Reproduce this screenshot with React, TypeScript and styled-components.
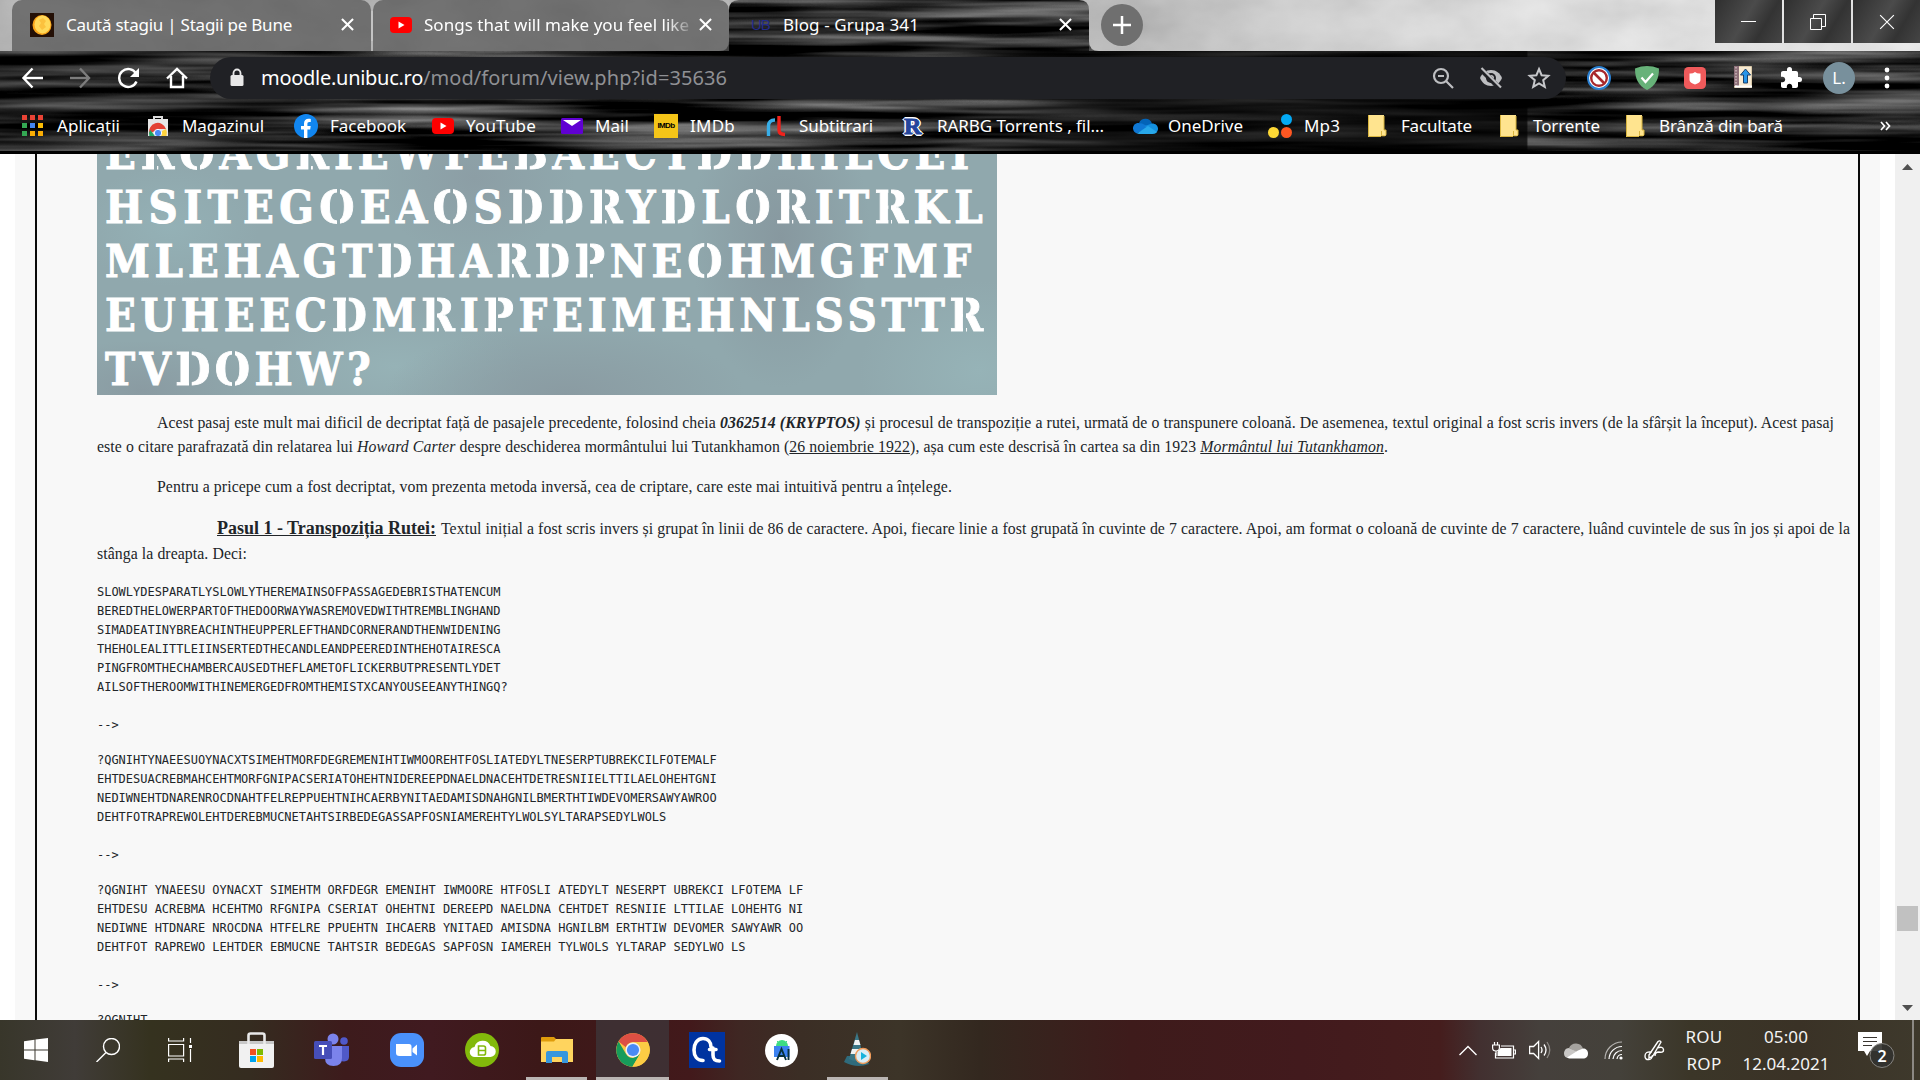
import React, { useLayoutEffect, useRef } from "react";
import styled, { createGlobalStyle, css } from "styled-components";

const Global = createGlobalStyle`
  *, *::before, *::after { box-sizing: border-box; }
  html, body { margin: 0; padding: 0; background: #fff; overflow: hidden; }
`;

const ui = `"Noto Sans", "Open Sans", sans-serif`;
const serif = `"Liberation Serif", "Times New Roman", serif`;

/* Text whose tracking is adjusted so that the run fills a given width. */
const FitSpan = styled.span`
  display: inline-block;
  justify-self: start;
  white-space: pre;
  flex: none;
`;
function Fit({ w, children }: { w: number; children: React.ReactNode }) {
  const ref = useRef<HTMLSpanElement>(null);
  useLayoutEffect(() => {
    const el = ref.current;
    if (!el) return;
    el.style.letterSpacing = "0px";
    const n = (el.textContent || "").length;
    const natural = el.getBoundingClientRect().width;
    el.style.letterSpacing = `${(w - natural) / Math.max(1, n)}px`;
  }, [w]);
  return <FitSpan ref={ref}>{children}</FitSpan>;
}

const Screen = styled.div`
  width: 1920px;
  height: 1080px;
  display: flex;
  flex-direction: column;
  overflow: hidden;
  font-family: ${ui};
`;

/* ---------- browser frame ---------- */
const Frame = styled.header`
  position: relative;
  isolation: isolate;
  height: 154px;
  flex: none;
  display: flex;
  flex-direction: column;
  background: #151515;
  color: #fff;
`;
const Backdrop = styled.svg`
  position: absolute;
  inset: 0;
  z-index: -1;
`;
const TabStrip = styled.div`
  height: 51px;
  display: flex;
  align-items: flex-start;
  padding-left: 12px;
`;
const Tab = styled.div<{ $w: number; $pad: number; $active?: boolean }>`
  width: ${(p) => p.$w}px;
  height: 51px;
  flex: none;
  display: flex;
  align-items: center;
  padding: 0 17px 2px ${(p) => p.$pad}px;
  font-size: 17px;
  border-radius: 10px 10px 0 0;
  ${(p) =>
    !p.$active &&
    css`
      background: rgba(70, 70, 70, 0.62);
    `}
`;
const TabIcon = styled.span<{ $gap: number }>`
  display: flex;
  margin-right: ${(p) => p.$gap}px;
`;
const TabTitle = styled.span<{ $fade?: boolean }>`
  flex: 1;
  display: flex;
  overflow: hidden;
  ${(p) =>
    p.$fade &&
    css`
      mask-image: linear-gradient(90deg, #000 88%, transparent 99%);
    `}
`;
const Divider = styled.i`
  width: 2px;
  height: 30px;
  margin-top: 11px;
  background: #c4c4c4;
  flex: none;
`;
const NewTab = styled.button`
  width: 42px;
  height: 42px;
  margin: 4px 0 0 12px;
  padding: 0;
  border: 0;
  border-radius: 50%;
  background: #6f6f6f;
  display: grid;
  place-items: center;
`;
const Caption = styled.div`
  margin-left: auto;
  display: flex;
  gap: 2px;
`;
const CaptionButton = styled.button`
  width: 67px;
  height: 43px;
  padding: 0;
  border: 0;
  display: grid;
  place-items: center;
  background: linear-gradient(120deg, #2f2f2f, #4b4b4b 45%, #333 70%, #454545);
`;
const Toolbar = styled.div`
  height: 51px;
  display: flex;
  align-items: center;
  padding: 2px 0 0 20px;
`;
const NavButton = styled.span<{ $w?: number }>`
  width: ${(p) => p.$w ?? 48}px;
  display: flex;
  flex: none;
`;
const Omnibox = styled.div`
  width: 1356px;
  flex: none;
  height: 42px;
  border-radius: 21px;
  background: #202125;
  display: flex;
  align-items: center;
  padding: 0 15px 0 19px;
  margin-right: 9px;
  font-size: 20px;
`;
const Url = styled.div`
  flex: 1;
  margin-left: 16px;
  display: flex;
`;
const UrlPath = styled.span`
  color: #8f9094;
`;
const OmniIcons = styled.div`
  display: flex;
  gap: 24px;
`;
const Extension = styled.span`
  width: 48px;
  display: flex;
  align-items: center;
  justify-content: center;
  flex: none;
`;
const Extensions = styled.div`
  display: flex;
  align-items: center;
`;
const Avatar = styled.span`
  width: 32px;
  height: 32px;
  border-radius: 50%;
  background: #78909c;
  display: grid;
  place-items: center;
  font-size: 17px;
  color: #fff;
`;
const Bookmarks = styled.nav`
  height: 50px;
  display: flex;
  align-items: center;
  padding: 0 0 3px 22px;
  font-size: 17px;
`;
const Bookmark = styled.span<{ $w: number; $text: number }>`
  width: ${(p) => p.$w}px;
  flex: none;
  display: grid;
  grid-template-columns: ${(p) => p.$text}px 1fr;
  align-items: center;
`;

/* ---------- page ---------- */
const Viewport = styled.main`
  height: 866px;
  flex: none;
  display: flex;
  overflow: hidden;
  background: #fff;
`;
const Page = styled.div`
  width: 1865px;
  margin-left: 15px;
  padding: 0 20px;
  background: #f8f8f8;
`;
const Post = styled.article`
  height: 866px;
  border: solid #0a0a0a;
  border-width: 0 2px;
  padding-left: 60px;
  overflow: hidden;
  color: #212529;
  font-family: ${serif};
  font-size: 15.8px;
`;
const Plate = styled.div`
  width: 900px;
  height: 241px;
  overflow: hidden;
  padding-left: 8px;
  color: #fff;
  font: bold 45px/54px "DejaVu Serif Condensed", "DejaVu Serif", serif;
  font-stretch: condensed;
  -webkit-text-stroke: 0.9px #fff;
  background:
    radial-gradient(ellipse 90px 60px at 8% 30%, #94b1b6, transparent),
    radial-gradient(ellipse 90px 150px at 76% 35%, #87989f, transparent),
    radial-gradient(ellipse 180px 70px at 52% 100%, #8a9ba2, transparent),
    radial-gradient(ellipse 120px 90px at 98% 90%, #96b3b7, transparent),
    radial-gradient(ellipse 100px 80px at 42% 10%, #8c9ea5, transparent),
    radial-gradient(ellipse 130px 60px at 33% 88%, #96b2b6, transparent),
    radial-gradient(ellipse 120px 50px at 5% 98%, #8a9ba2, transparent),
    #90a8ad;
`;
const PlateRows = styled.div`
  margin-top: -27px;
`;
const PlateRow = styled.div`
  height: 54px;
`;
/* Stencil bridge: a thin vertical cut through the glyph. */
const Cut = styled.span<{ $at: number }>`
  color: transparent;
  -webkit-text-stroke-color: transparent;
  background: linear-gradient(
    90deg,
    #fff ${(p) => p.$at - 3}%,
    transparent ${(p) => p.$at - 2}%,
    transparent ${(p) => p.$at + 4}%,
    #fff ${(p) => p.$at + 5}%
  );
  background-clip: text;
  -webkit-background-clip: text;
`;
const Para = styled.p<{ $top?: number }>`
  margin: ${(p) => p.$top ?? 16}px 0 0;
`;
const Line = styled.span<{ $indent?: number; $h?: number }>`
  display: flex;
  align-items: baseline;
  padding-left: ${(p) => p.$indent ?? 0}px;
  height: ${(p) => p.$h ?? 24}px;
  line-height: ${(p) => p.$h ?? 24}px;
`;
const StepTitle = styled.b`
  font-size: 18px;
  margin-right: 5px;
`;
const Cipher = styled.pre`
  margin: 16px 0 0;
  font: 11.985px/19px "DejaVu Sans Mono", monospace;
  color: #212529;
`;
const Scrollbar = styled.aside`
  width: 25px;
  margin-left: 15px;
  background: #f0f0f0;
  display: flex;
  flex-direction: column;
  align-items: center;
  padding: 10px 0 9px;
`;
const Thumb = styled.i`
  width: 21px;
  height: 25px;
  margin-top: 736px;
  margin-bottom: auto;
  background: #c1c1c1;
`;

/* ---------- taskbar ---------- */
const Taskbar = styled.footer`
  height: 60px;
  flex: none;
  display: flex;
  color: #f4f4f4;
  background: linear-gradient(
    90deg,
    #38362a 0,
    #403c38 75px,
    #35321f 150px,
    #352c20 250px,
    #3d1b1c 345px,
    #401a20 430px,
    #3c1818 540px,
    #42191b 690px,
    #3f2723 740px,
    #3b2e25 800px,
    #3c3428 900px,
    #33281f 980px,
    #3e1b1b 1130px,
    #421a1d 1300px,
    #451d1d 1440px,
    #423030 1480px,
    #45403c 1540px,
    #44413a 1620px,
    #3b3628 1690px,
    #3a3226 1800px,
    #3e392c 1920px
  );
`;
const TaskButton = styled.span<{ $w: number; $active?: boolean }>`
  width: ${(p) => p.$w}px;
  display: flex;
  align-items: center;
  justify-content: center;
  flex: none;
  background: ${(p) => (p.$active ? "rgba(62,62,66,.62)" : "none")};
`;
const RunningApp = styled(TaskButton)<{ $line: number }>`
  flex-direction: column;
  justify-content: flex-end;
  &::after {
    content: "";
    width: ${(p) => p.$line}px;
    height: 3px;
    margin-top: 10px;
    background: #bab5b3;
  }
`;
const Tray = styled.div`
  margin-left: auto;
  display: flex;
  align-items: center;
`;
const TrayIcon = styled.span<{ $w: number }>`
  width: ${(p) => p.$w}px;
  display: flex;
  flex: none;
`;
const TrayText = styled.div<{ $w: number; $gap?: number }>`
  width: ${(p) => p.$w}px;
  margin-right: ${(p) => p.$gap ?? 0}px;
  display: flex;
  flex-direction: column;
  align-items: center;
  font: 17px/27px ${ui};
`;
const ShowDesktop = styled.i`
  width: 8px;
  height: 60px;
  border-left: 2px solid #8c8984;
`;

/* ---------- icons ---------- */
const Cross = ({ s = 14, w = 2.2 }: { s?: number; w?: number }) => (
  <svg width={s} height={s} viewBox="0 0 14 14" fill="none" stroke="#fff" strokeWidth={w}>
    <path d="M1 1l12 12M13 1L1 13" />
  </svg>
);
const YouTube = () => (
  <svg width="22" height="16" viewBox="0 0 22 16">
    <rect width="22" height="16" rx="4" fill="#f00" />
    <path d="M8.5 4.6v6.8l6-3.4z" fill="#fff" />
  </svg>
);
const Coin = () => (
  <svg width="24" height="24" viewBox="0 0 24 24">
    <rect width="24" height="24" fill="#241006" />
    <ellipse cx="12" cy="12" rx="9.5" ry="10" fill="#f9a51a" />
    <ellipse cx="12.5" cy="11.5" rx="8" ry="9" fill="#ffd95a" />
    <path d="M9 7l4-2 3 3-2 3 2 3-4 3-3-4 2-3z" fill="#f7a51c" opacity=".45" />
  </svg>
);
const ChromeDisc = ({ s }: { s: number }) => (
  <svg width={s} height={s} viewBox="0 0 34 34">
    <circle cx="17" cy="17" r="16.8" fill="#fbc740" />
    <path d="M2.6 8.4A16.8 16.8 0 0 1 31.7 9H17a8 8 0 0 0-7.2 5.2z" fill="#dd4f43" />
    <path d="M2.6 8.4A16.8 16.8 0 0 0 16.4 33.8L24 21 17 25a8 8 0 0 1-7-4z" fill="#179c5a" />
    <path d="M31.7 9A16.8 16.8 0 0 1 16.4 33.8L24 21a8 8 0 0 0 0-8l-3-4z" fill="#fccc44" />
    <circle cx="17" cy="17" r="7.6" fill="#f1f1f1" />
    <circle cx="17" cy="17" r="6.1" fill="#4a8af4" />
  </svg>
);
const AppsGrid = () => (
  <svg width="21" height="21" viewBox="0 0 21 21">
    {["#ea4335", "#ea4335", "#ea4335", "#34a853", "#4285f4", "#fbbc05", "#34a853", "#fbae05", "#fbae05"].map((c, i) => (
      <rect key={i} x={(i % 3) * 8} y={Math.floor(i / 3) * 8} width="5" height="5" fill={c} />
    ))}
  </svg>
);
const WebStore = () => (
  <svg width="20" height="20" viewBox="0 0 20 20">
    <path d="M6 4V1h8v3" fill="none" stroke="#ddd" strokeWidth="2" />
    <path d="M0 3h20v17H0z" fill="#e6e6e6" />
    <path d="M1.5 18a8.5 8.5 0 0 1 16.5-5H10z" fill="#e34133" />
    <path d="M1.3 20a8 8 0 0 1 .9-6l4.8 6z" fill="#1da462" />
    <path d="M18 13a9 9 0 0 1 .5 7H12l2-5z" fill="#fdd23e" />
    <circle cx="10" cy="17" r="3.7" fill="#4a8af4" stroke="#fff" />
  </svg>
);
const Facebook = () => (
  <svg width="24" height="24" viewBox="0 0 24 24">
    <circle cx="12" cy="12" r="12" fill="#1186f0" />
    <path d="M10 24v-8.5H7V12h3V9.400C10 6.400 11.800 4.700 14.500 4.700c1.300 0 2.300.2 2.300.2v3h-1.500c-1.500 0-1.900.9-1.900 1.900V12h3.300l-.5 3.500h-2.800V24z" fill="#fff" />
  </svg>
);
const Mail = () => (
  <svg width="22" height="16" viewBox="0 0 22 16">
    <rect width="22" height="16" rx="1.500" fill="#6001d2" />
    <path d="M2 2h18l-9 6z" fill="#fff" />
  </svg>
);
const ImdbBox = styled.span`
  width: 24px;
  height: 24px;
  display: grid;
  place-items: center;
  background: #f5c518;
  color: #000;
  font: bold 8px/1 "Liberation Sans", sans-serif;
  letter-spacing: -0.6px;
`;
const Subs = () => (
  <svg width="20" height="22" viewBox="0 0 20 22" fill="none" strokeWidth="3.400">
    <path d="M2.500 21V11q0-6 6.500-6" stroke="#38aee8" />
    <path d="M13 1v14q0 4.500 6 4.500" stroke="#f0221c" />
  </svg>
);
const RLogo = styled.span`
  width: 22px;
  font: bold 24px/24px "Liberation Serif", serif;
  -webkit-text-stroke: 1px #24459c;
  color: #24459c;
  padding-left: 2px;
  text-shadow: 1px 1px #fff, -1px -1px #fff, 1px -1px #fff, -1px 1px #fff, 2px 0 #fff, -2px 0 #fff, 0 2px #fff, 0 -2px #fff;
`;
const OneDrive = () => (
  <svg width="25" height="16" viewBox="0 0 25 16">
    <path d="M6 5a7 7 0 0 1 13 .500l-5 5z" fill="#0364b8" />
    <path d="M5.500 5C2 5 0 7.500 0 10.300 0 13 2 15 4 15.500L16 9 9 5.500z" fill="#0f78d4" />
    <path d="M12 8l7-2.500c3.600 0 6 2.200 6 5.300 0 3-2.300 4.700-5 4.700z" fill="#1490df" />
    <path d="M4 15.500L15 8l9 6c-1 1.300-2.500 1.900-4.500 1.900H6c-.8 0-1.500-.1-2-.4z" fill="#28a8ea" />
  </svg>
);
const Dots3 = () => (
  <svg width="25" height="24" viewBox="0 0 25 24">
    <circle cx="18.500" cy="5.500" r="5.500" fill="#03a9f4" />
    <circle cx="5.500" cy="18.500" r="5.500" fill="#fdd835" />
    <circle cx="18.500" cy="18.500" r="5.500" fill="#ff5722" />
  </svg>
);
const FolderIcon = () => (
  <svg width="19" height="22" viewBox="0 0 19 22">
    <path d="M0 0h16v15h2v5q0 1-1 1h-4v1H0z" fill="#ffe48f" />
    <path d="M.5 0v21.500h12.500M16 1v14h2v4.500q0 1.300-1.500 1.300h-3V16" fill="none" stroke="#d9b53f" strokeWidth="1" />
  </svg>
);
const UniLogo = styled.span`
  width: 19px;
  font: 15px/20px "Liberation Sans", sans-serif;
  letter-spacing: -1.2px;
  color: #232b8c;
`;

const wood = (
  <Backdrop width="1920" height="154">
    <defs>
      <filter id="grain" x="0" y="0" width="100%" height="100%" colorInterpolationFilters="sRGB">
        <feTurbulence type="fractalNoise" baseFrequency="0.0035 0.09" numOctaves="3" seed="11" />
        <feColorMatrix values="1.05 0 0 0 -.35  1.05 0 0 0 -.35  1.05 0 0 0 -.35  0 0 0 0 1" />
      </filter>
      <filter id="mist" x="0" y="0" width="100%" height="100%">
        <feTurbulence type="fractalNoise" baseFrequency="0.012 0.02" numOctaves="4" seed="5" />
        <feColorMatrix values=".7 0 0 0 .2  .7 0 0 0 .2  .7 0 0 0 .2  0 0 0 0 .3" />
      </filter>
      <linearGradient id="sky">
        <stop offset="0" stopColor="#a8a8a8" />
        <stop offset=".3" stopColor="#b0b0b0" />
        <stop offset=".6" stopColor="#bcbcbc" />
        <stop offset=".77" stopColor="#e2e2e2" />
        <stop offset="1" stopColor="#f6f6f6" />
      </linearGradient>
      <linearGradient id="shade">
        <stop offset="0" stopColor="#000" stopOpacity=".35" />
        <stop offset=".2" stopColor="#000" stopOpacity="0" />
        <stop offset=".5" stopColor="#000" stopOpacity="0" />
        <stop offset=".58" stopColor="#000" stopOpacity=".6" />
        <stop offset=".795" stopColor="#000" stopOpacity=".75" />
        <stop offset=".796" stopColor="#000" stopOpacity=".1" />
        <stop offset="1" stopColor="#000" stopOpacity=".15" />
      </linearGradient>
      <clipPath id="strip">
        <path d="M0 0H729V51H0zM1089 0H1920V51H1089z" />
      </clipPath>
    </defs>
    <rect width="1920" height="154" filter="url(#grain)" />
    <rect y="51" width="1920" height="103" fill="url(#shade)" />
    <path
      d="M0 0H1920V51H1099Q1089 51 1089 41V10Q1089 0 1079 0H739Q729 0 729 10V41Q729 51 719 51H0z"
      fill="url(#sky)"
    />
    <g clipPath="url(#strip)">
      <rect width="1920" height="51" filter="url(#mist)" />
    </g>
    <path d="M0 152.500H1920" stroke="#000" strokeWidth="3" />
  </Backdrop>
);

/* ---------- content ---------- */
const cuts: Record<string, number> = { O: 46, D: 37, R: 37, P: 38, B: 37 };
const plate: [string, number][] = [
  ["EROAGRIEWFEBAECTDDHILCEI", 869],
  ["HSITEGOEAOSDDRYDLORITRKL", 883],
  ["MLEHAGTDHARDPNEOHMGFMF", 871],
  ["EUHEECDMRIPFEIMEHNLSSTTR", 883],
  ["TVDOHW?", 270],
];

const pre1 = `SLOWLYDESPARATLYSLOWLYTHEREMAINSOFPASSAGEDEBRISTHATENCUM
BEREDTHELOWERPARTOFTHEDOORWAYWASREMOVEDWITHTREMBLINGHAND
SIMADEATINYBREACHINTHEUPPERLEFTHANDCORNERANDTHENWIDENING
THEHOLEALITTLEIINSERTEDTHECANDLEANDPEEREDINTHEHOTAIRESCA
PINGFROMTHECHAMBERCAUSEDTHEFLAMETOFLICKERBUTPRESENTLYDET
AILSOFTHEROOMWITHINEMERGEDFROMTHEMISTXCANYOUSEEANYTHINGQ?

-->`;
const pre2 = `?QGNIHTYNAEESUOYNACXTSIMEHTMORFDEGREMENIHTIWMOOREHTFOSLIATEDYLTNESERPTUBREKCILFOTEMALF
EHTDESUACREBMAHCEHTMORFGNIPACSERIATOHEHTNIDEREEPDNAELDNACEHTDETRESNIIELTTILAELOHEHTGNI
NEDIWNEHTDNARENROCDNAHTFELREPPUEHTNIHCAERBYNITAEDAMISDNAHGNILBMERTHTIWDEVOMERSAWYAWROO
DEHTFOTRAPREWOLEHTDEREBMUCNETAHTSIRBEDEGASSAPFOSNIAMEREHTYLWOLSYLTARAPSEDYLWOLS

-->`;
const pre3 = `?QGNIHT YNAEESU OYNACXT SIMEHTM ORFDEGR EMENIHT IWMOORE HTFOSLI ATEDYLT NESERPT UBREKCI LFOTEMA LF
EHTDESU ACREBMA HCEHTMO RFGNIPA CSERIAT OHEHTNI DEREEPD NAELDNA CEHTDET RESNIIE LTTILAE LOHEHTG NI
NEDIWNE HTDNARE NROCDNA HTFELRE PPUEHTN IHCAERB YNITAED AMISDNA HGNILBM ERTHTIW DEVOMER SAWYAWR OO
DEHTFOT RAPREWO LEHTDER EBMUCNE TAHTSIR BEDEGAS SAPFOSN IAMEREH TYLWOLS YLTARAP SEDYLWO LS

-->`;

const bookmarks: { icon: React.ReactNode; label: string; w: number; text: number; fit: number }[] = [
  { icon: <AppsGrid />, label: "Aplicații", w: 126, text: 35, fit: 63 },
  { icon: <WebStore />, label: "Magazinul", w: 146, text: 34, fit: 82 },
  { icon: <Facebook />, label: "Facebook", w: 138, text: 36, fit: 76 },
  { icon: <YouTube />, label: "YouTube", w: 129, text: 34, fit: 70 },
  { icon: <Mail />, label: "Mail", w: 93, text: 34, fit: 34 },
  { icon: <ImdbBox>IMDb</ImdbBox>, label: "IMDb", w: 112, text: 36, fit: 45 },
  { icon: <Subs />, label: "Subtitrari", w: 136, text: 33, fit: 74 },
  { icon: <RLogo>R</RLogo>, label: "RARBG Torrents , fil...", w: 231, text: 35, fit: 167 },
  { icon: <OneDrive />, label: "OneDrive", w: 135, text: 35, fit: 75 },
  { icon: <Dots3 />, label: "Mp3", w: 100, text: 36, fit: 36 },
  { icon: <FolderIcon />, label: "Facultate", w: 132, text: 33, fit: 71 },
  { icon: <FolderIcon />, label: "Torrente", w: 126, text: 33, fit: 67 },
  { icon: <FolderIcon />, label: "Brânză din bară", w: 254, text: 33, fit: 124 },
];

function Browser() {
  return (
    <Frame>
      {wood}
      <TabStrip>
        <Tab $w={359} $pad={18}>
          <TabIcon $gap={12}><Coin /></TabIcon>
          <TabTitle><Fit w={226}>Caută stagiu | Stagii pe Bune</Fit></TabTitle>
          <Cross s={13} />
        </Tab>
        <Divider />
        <Tab $w={356} $pad={17}>
          <TabIcon $gap={12}><YouTube /></TabIcon>
          <TabTitle $fade><Fit w={265}>Songs that will make you feel like</Fit></TabTitle>
          <Cross s={13} />
        </Tab>
        <Tab $w={360} $pad={22} $active>
          <TabIcon $gap={13}><UniLogo>UB</UniLogo></TabIcon>
          <TabTitle><Fit w={136}>Blog - Grupa 341</Fit></TabTitle>
          <Cross s={13} />
        </Tab>
        <NewTab>
          <svg width="18" height="18" stroke="#fff" strokeWidth="2.500"><path d="M9 0v18M0 9h18" /></svg>
        </NewTab>
        <Caption>
          <CaptionButton>
            <svg width="15" height="15" stroke="#fff"><path d="M0 7.500h15" /></svg>
          </CaptionButton>
          <CaptionButton>
            <svg width="16" height="16" fill="none" stroke="#fff"><path d="M.5 4.500h11v11H.5zM3.500 4.500V.5h12v12h-4" /></svg>
          </CaptionButton>
          <CaptionButton><Cross s={16} w={1} /></CaptionButton>
        </Caption>
      </TabStrip>
      <Toolbar>
        <NavButton>
          <svg width="24" height="22" viewBox="0 0 24 22" fill="none" stroke="#fff" strokeWidth="2.400"><path d="M23 11H4M12.500 1.500L3.500 11l9 9.500" /></svg>
        </NavButton>
        <NavButton>
          <svg width="24" height="22" viewBox="0 0 24 22" fill="none" stroke="#7d7d7d" strokeWidth="2.400"><path d="M2 11h19M12 1.500l9 9.500-9 9.500" /></svg>
        </NavButton>
        <NavButton $w={50}>
          <svg width="24" height="22" viewBox="0 0 24 22" fill="none" stroke="#fff" strokeWidth="2.400"><path d="M20.500 14.500A9 9 0 1 1 20 6.500" /><path d="M23 1v9h-9z" fill="#fff" stroke="none" /></svg>
        </NavButton>
        <NavButton $w={44}>
          <svg width="22" height="22" viewBox="0 0 22 22" fill="none" stroke="#fff" strokeWidth="2.400"><path d="M1 11.500L11 2l10 9.500M5 9v11h12V9" /></svg>
        </NavButton>
        <Omnibox>
          <svg width="16" height="19" viewBox="0 0 16 19"><rect x="1.500" y="7" width="13" height="11" rx="1.500" fill="#e8e8e8" /><path d="M4.500 8V5a3.500 3.500 0 0 1 7 0v3" fill="none" stroke="#e8e8e8" strokeWidth="1.800" /></svg>
          <Url>
            <Fit w={162}>moodle.unibuc.ro</Fit>
            <UrlPath><Fit w={304}>/mod/forum/view.php?id=35636</Fit></UrlPath>
          </Url>
          <OmniIcons>
            <svg width="24" height="24" viewBox="0 0 24 24" fill="none" stroke="#bdbec1" strokeWidth="2.200"><circle cx="10" cy="10" r="7" /><path d="M15 15l7 7M7 10h6" /></svg>
            <svg width="24" height="24" viewBox="0 0 24 24" fill="#bdbec1"><path d="M12 4C7 4 3 7 1 12c2 5 6 8 11 8s9-3 11-8c-2-5-6-8-11-8z" /><circle cx="12" cy="12" r="5" fill="#202125" /><circle cx="12" cy="12" r="3" /><path d="M1.500 3L21 22.500" stroke="#202125" strokeWidth="5" /><path d="M2.500 2L22 21.500" stroke="#bdbec1" strokeWidth="2.200" /></svg>
            <svg width="24" height="24" viewBox="0 0 24 24" fill="none" stroke="#c6c7ca" strokeWidth="2"><path d="M12 3l2.600 6.200 6.700.6-5.100 4.400 1.600 6.600L12 17.300l-5.800 3.500 1.600-6.600-5.100-4.400 6.700-.6z" /></svg>
          </OmniIcons>
        </Omnibox>
        <Extensions>
          <Extension>
            <svg width="24" height="24" viewBox="0 0 24 24" fill="none"><circle cx="12" cy="12" r="11" fill="#fff" stroke="#2a7fd0" strokeWidth="2" /><circle cx="12" cy="12" r="7.800" stroke="#a8282c" strokeWidth="2.400" /><path d="M6.500 6.500l11 11" stroke="#a8282c" strokeWidth="2.600" /></svg>
          </Extension>
          <Extension>
            <svg width="24" height="24" viewBox="0 0 24 24"><path d="M12 0c4 0 8 .8 12 2.500 0 10-3 17-12 21.500C3 19.500 0 12.500 0 2.500 4 .8 8 0 12 0z" fill="#67b279" /><path d="M6.500 11.500l4 4.500L18 7.500" fill="none" stroke="#fff" strokeWidth="2.200" /></svg>
          </Extension>
          <Extension>
            <svg width="22" height="22" viewBox="0 0 22 22"><rect width="22" height="22" rx="4.500" fill="#f05a5b" /><path d="M5.500 6.500Q8.500 7 11 5q2.500 2 5.500 1.500V13q0 2.500-5.500 4.500-5.500-2-5.500-4.500z" fill="#fff" /></svg>
          </Extension>
          <Extension>
            <svg width="19" height="23" viewBox="0 0 19 23"><path d="M.5.5h17v21H.5z" fill="#f7ead2" stroke="#d8c8a8" /><path d="M0 0h5v20H0z" fill="#8d6f78" /><path d="M2 1v19" stroke="#e9dada" strokeDasharray="1.500 1.500" /><path d="M1 20.500h17" stroke="#fff" strokeWidth="2" /><path d="M11.500 3l5 6h-3v8h-4V9h-3z" fill="#2694e8" stroke="#1a3f6a" /></svg>
          </Extension>
          <Extension>
            <svg width="24" height="24" viewBox="0 0 24 24" fill="#fff"><path d="M20.500 11H19V7c0-1.100-.9-2-2-2h-4V3.500a2.500 2.500 0 0 0-5 0V5H4c-1.100 0-2 .9-2 2v3.800h1.500c1.500 0 2.700 1.200 2.700 2.700S5 16.200 3.500 16.200H2V20c0 1.100.9 2 2 2h3.800v-1.500c0-1.500 1.200-2.700 2.700-2.700s2.700 1.200 2.700 2.700V22H17c1.100 0 2-.9 2-2v-4h1.500a2.500 2.500 0 0 0 0-5z" /></svg>
          </Extension>
          <Extension><Avatar>L.</Avatar></Extension>
          <Extension>
            <svg width="6" height="22" viewBox="0 0 6 22" fill="#fff"><circle cx="3" cy="3" r="2.400" /><circle cx="3" cy="11" r="2.400" /><circle cx="3" cy="19" r="2.400" /></svg>
          </Extension>
        </Extensions>
      </Toolbar>
      <Bookmarks>
        {bookmarks.map((b, i) => (
          <Bookmark key={i} $w={b.w} $text={b.text}>
            {b.icon}
            <Fit w={b.fit}>{b.label}</Fit>
          </Bookmark>
        ))}
        <svg width="11" height="10" viewBox="0 0 11 10" fill="none" stroke="#fff" strokeWidth="1.700"><path d="M1 1l3.500 4L1 9M6 1l3.500 4L6 9" /></svg>
      </Bookmarks>
    </Frame>
  );
}

function ForumPost() {
  return (
    <Post>
      <Plate>
        <PlateRows>
          {plate.map(([row, w]) => (
            <PlateRow key={row}>
              <Fit w={w}>
                {row.split("").map((c, i) => (cuts[c] ? <Cut key={i} $at={cuts[c]}>{c}</Cut> : c))}
              </Fit>
            </PlateRow>
          ))}
        </PlateRows>
      </Plate>
      <Para>
        <Line $indent={60}>
          <Fit w={1677}>
            Acest pasaj este mult mai dificil de decriptat față de pasajele precedente, folosind cheia{" "}
            <b><i>0362514 (KRYPTOS)</i></b> și procesul de transpoziție a rutei, urmată de o transpunere coloană. De
            {" "}asemenea, textul original a fost scris invers (de la sfârșit la început). Acest pasaj
          </Fit>
        </Line>
        <Line>
          <Fit w={1291}>
            este o citare parafrazată din relatarea lui <i>Howard Carter</i> despre deschiderea mormântului lui Tutankhamon (<u>26 noiembrie 1922</u>), așa cum este descrisă în cartea sa din 1923 <i><u>Mormântul lui Tutankhamon</u></i>.
          </Fit>
        </Line>
      </Para>
      <Para>
        <Line $indent={60}>
          <Fit w={795}>Pentru a pricepe cum a fost decriptat, vom prezenta metoda inversă, cea de criptare, care este mai intuitivă pentru a înțelege.</Fit>
        </Line>
      </Para>
      <Para $top={16}>
        <Line $indent={120} $h={26}>
          <StepTitle><Fit w={219}><u>Pasul 1 - Transpoziția Rutei:</u></Fit></StepTitle>
          <Fit w={1409}>Textul inițial a fost scris invers și grupat în linii de 86 de caractere. Apoi, fiecare linie a fost grupată în cuvinte de 7 caractere. Apoi, am format o coloană de cuvinte de 7 caractere, luând cuvintele de sus în jos și apoi de la</Fit>
        </Line>
        <Line $h={26}><Fit w={150}>stânga la dreapta. Deci:</Fit></Line>
      </Para>
      <Cipher>{pre1}</Cipher>
      <Cipher>{pre2}</Cipher>
      <Cipher>{pre3}</Cipher>
      <Cipher>?QGNIHT</Cipher>
    </Post>
  );
}

function WindowsTaskbar() {
  return (
    <Taskbar>
      <TaskButton $w={72}>
        <svg width="24" height="24" viewBox="0 0 24 24" fill="#fff"><path d="M0 3.300L10.500 1.800V11.500H0zM11.500 1.600L24 0v11.500H11.500zM0 12.500h10.500v9.700L0 20.700zM11.500 12.500H24V24l-12.500-1.700z" /></svg>
      </TaskButton>
      <TaskButton $w={72}>
        <svg width="24" height="24" viewBox="0 0 24 24" fill="none" stroke="#fff" strokeWidth="1.400"><circle cx="15.500" cy="8.500" r="8" /><path d="M10 14.500L.5 24" /></svg>
      </TaskButton>
      <TaskButton $w={72}>
        <svg width="24" height="24" viewBox="0 0 24 24" fill="none" stroke="#fff" strokeWidth="1.200"><path d="M.6 0v3h15V0M.6 24v-3h15v3M.6 6.500h15v11.500H.6zM22.500 0v5M22.500 11v13" /><rect x="21" y="7" width="3" height="3" fill="#fff" stroke="none" /></svg>
      </TaskButton>
      <TaskButton $w={81}>
        <svg width="35" height="36" viewBox="0 0 35 36"><path d="M0 9h35v25q0 2-2 2H2q-2 0-2-2z" fill="#f1f1f1" /><path d="M0 9h35v3H0z" fill="#c8c8c8" /><path d="M9.500 12V3.500q0-2 2-2h12q2 0 2 2V12" fill="none" stroke="#e9e9e9" strokeWidth="2.600" /><path d="M11 17h6v6h-6z" fill="#f25022" /><path d="M18 17h6v6h-6z" fill="#7fba00" /><path d="M11 24h6v6h-6z" fill="#00a4ef" /><path d="M18 24h6v6h-6z" fill="#ffb900" /></svg>
      </TaskButton>
      <TaskButton $w={70}>
        <svg width="36" height="34" viewBox="0 0 36 34"><circle cx="19" cy="6" r="5.500" fill="#7b83eb" /><circle cx="30" cy="8" r="3.800" fill="#5059c9" /><path d="M25 13h10v11q0 4-5 4.500-5 0-5-4.500z" fill="#5059c9" /><path d="M11 13h17v12q0 8-8.500 8T11 25z" fill="#7b83eb" /><rect y="8" width="18" height="18" rx="1.500" fill="#464eb8" /><path d="M5 13h8M9 13v9" stroke="#fff" strokeWidth="2.200" /></svg>
      </TaskButton>
      <TaskButton $w={80}>
        <svg width="34" height="34" viewBox="0 0 34 34"><rect width="34" height="34" rx="11" fill="#4a91fb" /><path d="M6 11h13q2.500 0 2.500 2.500V23h-12Q6 23 6 20zM22.500 15.500L27 11.500v11l-4.500-3.500z" fill="#fff" /></svg>
      </TaskButton>
      <TaskButton $w={70}>
        <svg width="34" height="34" viewBox="0 0 34 34"><circle cx="17" cy="17" r="17" fill="#82b90b" /><path d="M10 24a5 5 0 0 1-.5-10 8.500 8.500 0 0 1 16-1 5.500 5.500 0 0 1-.5 11z" fill="#fff" /><path d="M13.500 13h5q2 0 2 2v5.500q0 1.500-2 1.500h-5zM13.500 17.500h7" fill="none" stroke="#82b90b" strokeWidth="1.600" /></svg>
      </TaskButton>
      <RunningApp $w={79} $line={61}>
        <svg width="32" height="34" viewBox="0 0 32 34"><path d="M0 5q0-1 1-1h12l2 2h17v4H0z" fill="#df9c0b" /><path d="M0 8.500h13l2-2.500h17v23H0z" fill="#ffd45e" /><path d="M5 30V20q0-2 2-2h18q2 0 2 2v10h-6v-6H11v6z" fill="#3796dd" /></svg>
      </RunningApp>
      <RunningApp $w={73} $line={73} $active>
        <ChromeDisc s={34} />
      </RunningApp>
      <TaskButton $w={76}>
        <svg width="36" height="36" viewBox="0 0 36 36" fill="none" stroke="#fff" strokeLinecap="round"><rect width="36" height="36" fill="#0033a0" stroke="none" /><path d="M22 15c0-5-3-8.500-8-8.500C8 6.500 5 12 5 18s3 10.500 9 10.500M24 16v7c0 4.500 2 6 6.500 6M20.500 17.500h6.500" strokeWidth="3.600" /></svg>
      </TaskButton>
      <TaskButton $w={73}>
        <svg width="33" height="33" viewBox="0 0 33 33"><circle cx="16.500" cy="16.500" r="16.500" fill="#fff" /><path d="M9 12h15.500v11H9z" fill="#3c82f0" /><path d="M11 12a6 6 0 0 1 12 0z" fill="#3ddc84" /><path d="M12 7l2 2M22 7l-2 2" stroke="#3ddc84" /><path d="M12 26l4.500-11L21 26M13.500 22h6M23.500 15v11" fill="none" stroke="#07303a" strokeWidth="1.900" /></svg>
      </TaskButton>
      <RunningApp $w={79} $line={61}>
        <svg width="27" height="35" viewBox="0 0 27 35"><path d="M3 24h18l4 8q-12 5-25-2z" fill="#2f6b7c" /><path d="M13 0L5 27q7 4 15 0z" fill="#3a7686" /><path d="M11 8h4l1.500 5h-7zM8 17h10l1.500 5h-13z" fill="#f0f2f3" /><circle cx="19" cy="24" r="7.500" fill="#d9edf6" stroke="#f09b5a" strokeWidth="1.400" /><path d="M17 20v8l6-4z" fill="#16b2dc" /></svg>
      </RunningApp>
      <Tray>
        <TrayIcon $w={33}>
          <svg width="18" height="11" viewBox="0 0 18 11" fill="none" stroke="#fff" strokeWidth="1.400"><path d="M.5 10L9 1.500l8.500 8.500" /></svg>
        </TrayIcon>
        <TrayIcon $w={37}>
          <svg width="24" height="17" viewBox="0 0 24 17" fill="none" stroke="#fff" strokeWidth="1.200"><path d="M9 4h12.500v12H3.500v-5M22 8h1.500v4H22M2.500 0v3M5.500 0v3M.6 3h6.800v3q0 3-3.400 3T.6 6zM4 9v5" /><path d="M8.500 6h11v8h-14v-4z" fill="#fff" stroke="none" /></svg>
        </TrayIcon>
        <TrayIcon $w={35}>
          <svg width="22" height="20" viewBox="0 0 22 20" fill="none" stroke="#fff" strokeWidth="1.300"><path d="M.6 6.500h4l5-5v17l-5-5h-4zM12 7q2 3 0 6M15 4.500q4 5.500 0 11" /><path d="M18 2q5.500 8 0 16" stroke="#8b8884" /></svg>
        </TrayIcon>
        <TrayIcon $w={40}>
          <svg width="24" height="17" viewBox="0 0 24 17"><path d="M5 6a7.500 7.500 0 0 1 14 .5l-5 4z" fill="#a5a29e" /><path d="M5 6C1.500 6 0 9 0 11.500 0 14.500 2 16 5 16l9-6z" fill="#c9c7c5" /><path d="M3 15.500l11-7 5-2c3 0 5 2 5 5 0 3.500-2 5-5 5H5z" fill="#fff" /></svg>
        </TrayIcon>
        <TrayIcon $w={40}>
          <svg width="19" height="19" viewBox="0 0 19 19" fill="none" stroke="#fff" strokeWidth="1.200"><path d="M1 18A17 17 0 0 1 18 1" stroke="#b5b3b0" /><path d="M5 18A13 13 0 0 1 18 5.500M9 18a9 9 0 0 1 9-8.500M13 18a5 5 0 0 1 5-4.500" /><circle cx="17" cy="17" r="1.600" fill="#fff" stroke="none" /></svg>
        </TrayIcon>
        <TrayIcon $w={39}>
          <svg width="21" height="21" viewBox="0 0 21 21" fill="none" stroke="#fff" strokeWidth="1.400"><path d="M5 15L14 1.500q2-1.500 3 .5L8.500 16.500 5 18zM8 12q-7-1-7 4 0 4 4 3.500 3 0 3.500-4.500M13 8q6-2 6.500 1.500Q20 13 15 12q-4 0-4 4" /></svg>
        </TrayIcon>
        <TrayText $w={42}><Fit w={37}>ROU</Fit><Fit w={35}>ROP</Fit></TrayText>
        <TrayText $w={122} $gap={11}><Fit w={44}>05:00</Fit><Fit w={87}>12.04.2021</Fit></TrayText>
        <TrayIcon $w={54}>
          <svg width="37" height="37" viewBox="0 0 37 37"><path d="M0 0h24v19H12l-3 5-3-5H0z" fill="#fff" /><path d="M5 5.500h14M5 9.500h14M5 13.500h9" stroke="#3a3530" strokeWidth="1.200" /><circle cx="24" cy="23.500" r="12" fill="#32322f" fillOpacity=".9" stroke="#85837f" /><text x="24" y="29.500" textAnchor="middle" fill="#fff" fontSize="16" fontWeight="600" fontFamily="Noto Sans, sans-serif">2</text></svg>
        </TrayIcon>
        <ShowDesktop />
      </Tray>
    </Taskbar>
  );
}

export default function App() {
  return (
    <>
      <Global />
      <Screen>
        <Browser />
        <Viewport>
          <Page><ForumPost /></Page>
          <Scrollbar>
            <svg width="11" height="6" fill="#505050"><path d="M0 6L5.500 0 11 6z" /></svg>
            <Thumb />
            <svg width="11" height="6" fill="#505050"><path d="M0 0l5.500 6L11 0z" /></svg>
          </Scrollbar>
        </Viewport>
        <WindowsTaskbar />
      </Screen>
    </>
  );
}
